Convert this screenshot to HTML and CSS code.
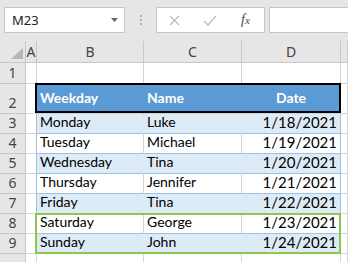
FILE: index.html
```html
<!DOCTYPE html>
<html lang="en">
<head>
    <meta charset="UTF-8">
    <title>Weekdays - Sheet</title>
    <link rel="stylesheet" href="styles.css">
</head>
<body>
    <div class="toolbar">
        <div class="namebox">
            <span>M23</span>
            <svg class="caret" width="7" height="4" viewBox="0 0 7 4"><path d="M0 0h7L3.5 4z" fill="#666"/></svg>
        </div>
        <div class="grip"><i></i><i></i><i></i></div>
        <div class="fxbox">
            <svg class="icon" width="11" height="11" viewBox="0 0 11 11"><path d="M1 1l9 9M10 1l-9 9" stroke="#bdbdbd" stroke-width="1.3" fill="none"/></svg>
            <svg class="icon" width="14" height="11" viewBox="0 0 14 11"><path d="M1 6l4 4 8-9" stroke="#bdbdbd" stroke-width="1.4" fill="none"/></svg>
            <span class="fx">f<small>x</small></span>
        </div>
        <div class="formula"></div>
    </div>

    <div class="sheet-wrap">
        <div class="sheet">
            <div class="ch corner"><svg width="12" height="11" viewBox="0 0 12 11"><path d="M12 0v11H0z" fill="#b6b6b6"/></svg></div>
            <div class="ch">A</div>
            <div class="ch">B</div>
            <div class="ch">C</div>
            <div class="ch">D</div>
            <div class="ch"></div>

            <div class="rh">1</div>
            <div class="c"></div><div class="c"></div><div class="c"></div><div class="c"></div><div class="c"></div>

            <div class="rh">2</div>
            <div class="c"></div>
            <div class="c head">Weekday</div>
            <div class="c head">Name</div>
            <div class="c head mid">Date</div>
            <div class="c"></div>

            <div class="rh">3</div>
            <div class="c edge"></div>
            <div class="c band">Monday</div>
            <div class="c band">Luke</div>
            <div class="c band last num">1/18/2021</div>
            <div class="c"></div>

            <div class="rh">4</div>
            <div class="c edge"></div>
            <div class="c plain">Tuesday</div>
            <div class="c plain">Michael</div>
            <div class="c plain last num">1/19/2021</div>
            <div class="c"></div>

            <div class="rh">5</div>
            <div class="c edge"></div>
            <div class="c band">Wednesday</div>
            <div class="c band">Tina</div>
            <div class="c band last num">1/20/2021</div>
            <div class="c"></div>

            <div class="rh">6</div>
            <div class="c edge"></div>
            <div class="c plain">Thursday</div>
            <div class="c plain">Jennifer</div>
            <div class="c plain last num">1/21/2021</div>
            <div class="c"></div>

            <div class="rh">7</div>
            <div class="c edge"></div>
            <div class="c band">Friday</div>
            <div class="c band">Tina</div>
            <div class="c band last num">1/22/2021</div>
            <div class="c"></div>

            <div class="rh">8</div>
            <div class="c edge"></div>
            <div class="c plain">Saturday</div>
            <div class="c plain">George</div>
            <div class="c plain last num">1/23/2021</div>
            <div class="c"></div>

            <div class="rh">9</div>
            <div class="c edge"></div>
            <div class="c band">Sunday</div>
            <div class="c band">John</div>
            <div class="c band last num">1/24/2021</div>
            <div class="c"></div>

            <div class="rh"></div>
            <div class="c"></div><div class="c"></div><div class="c"></div><div class="c"></div><div class="c"></div>
        </div>

        <div class="sheet frames">
            <div class="frame frame-head"></div>
            <div class="frame frame-pick"></div>
        </div>
    </div>
</body>
</html>
```

FILE: styles.css
```css
body {
    margin: 0;
    width: 348px;
    height: 262px;
    overflow: hidden;
    background-color: #ffffff;
    font-family: Lato, "Liberation Sans", sans-serif;
}

/* formula bar */

.toolbar {
    height: 41px;
    background-color: #e6e6e6;
    display: flex;
    align-items: flex-start;
    padding-top: 7px;
    box-sizing: border-box;
}

.namebox {
    margin-left: 4px;
    width: 121px;
    height: 26px;
    box-sizing: border-box;
    border: 1px solid #c6c6c6;
    background-color: #fff;
    display: flex;
    align-items: center;
    justify-content: space-between;
    padding: 0 6px 0 7px;
    font-family: "Noto Sans", sans-serif;
    font-size: 13px;
    color: #222;
}

.grip {
    width: 31px;
    display: flex;
    flex-direction: column;
    align-items: center;
    gap: 2px;
    padding-top: 8px;
}

.grip i {
    width: 2px;
    height: 2px;
    background-color: #b0b0b0;
}

.fxbox {
    width: 109px;
    height: 26px;
    box-sizing: border-box;
    border: 1px solid #c6c6c6;
    background-color: #fff;
    display: flex;
    align-items: center;
    padding-left: 12px;
}

.fxbox .icon:nth-child(2) {
    margin-left: 23px;
}

.fx {
    margin-left: 24px;
    font-family: "Liberation Serif", serif;
    font-style: italic;
    font-size: 14px;
    color: #444;
}

.fx small {
    font-size: 11px;
}

.formula {
    margin-left: 4px;
    flex: 1;
    height: 26px;
    box-sizing: border-box;
    border: 1px solid #c6c6c6;
    border-right: none;
    background-color: #fff;
}

/* grid */

.sheet-wrap {
    display: grid;
}

.sheet {
    grid-area: 1 / 1;
    display: grid;
    grid-template-columns: 26px 11px 107px 98px 99px 1fr;
    grid-template-rows: 22px 21px 30px repeat(7, 20px) 20px;
}

.sheet > div {
    box-sizing: border-box;
}

.ch,
.rh {
    background-color: #e6e6e6;
    border-right: 1px solid #c8c8c8;
    border-bottom: 1px solid #c8c8c8;
    font-family: "Noto Sans", sans-serif;
    font-size: 14px;
    color: #444;
    display: flex;
    justify-content: center;
}

.ch {
    align-items: center;
    padding-bottom: 1px;
}

.corner {
    justify-content: flex-end;
    align-items: flex-end;
    padding: 0 2px 3px 0;
}

.rh {
    align-items: flex-end;
    padding-bottom: 1px;
    line-height: 18px;
}

.c {
    border-right: 1px solid #d4d4d4;
    border-bottom: 1px solid #d4d4d4;
    display: flex;
    align-items: flex-end;
    padding: 0 3px 2px 3px;
    font-size: 14px;
    line-height: 18px;
    color: #000;
    white-space: nowrap;
}

.c.edge {
    border-right-color: #9bc2e6;
}

.head {
    background-color: #5b9bd5;
    border-right-color: #5b9bd5;
    color: #fff;
    font-weight: bold;
    align-items: center;
    padding-bottom: 1px;
}

.mid {
    justify-content: center;
}

.band {
    background-color: #ddebf7;
    border-right-color: #ddebf7;
    border-bottom-color: #9bc2e6;
}

.plain {
    border-bottom-color: #9bc2e6;
}

.last {
    border-right-color: #9bc2e6;
}

.num {
    justify-content: flex-end;
    font-size: 15px;
}

.frames {
    pointer-events: none;
}

.frame-head {
    grid-column: 3 / 6;
    grid-row: 3 / 4;
    margin: -1px 0 1px -2px;
    border: 2px solid #000;
}

.frame-pick {
    grid-column: 3 / 6;
    grid-row: 9 / 11;
    margin: -1px 0 0 -2px;
    border: 2px solid #8cc84b;
}
```
